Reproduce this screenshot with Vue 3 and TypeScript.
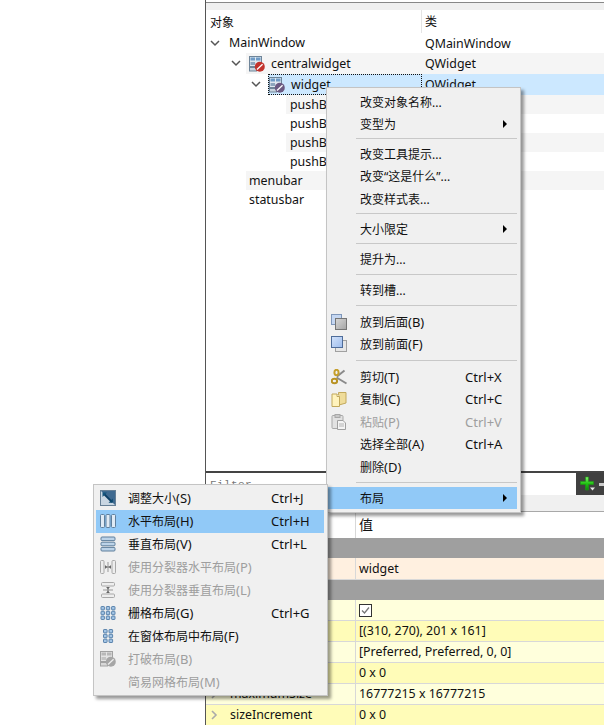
<script setup lang="ts">
interface TreeRow {
  name: string;
  cls: string;
  level: 'root' | 'child' | 'leaf' | 'bar';
  icon?: 'live' | 'muted';
  open?: boolean;
  tall?: boolean;
  shaded?: boolean;
  selected?: boolean;
}

interface PropRow {
  name: string;
  value?: string;
  kind: 'group' | 'peach' | 'pale' | 'yellow';
  check?: boolean;
  arrow?: boolean;
}

interface MenuEntry {
  text?: string;
  mnemonic?: string;
  shortcut?: string;
  icon?: string;
  more?: boolean;
  off?: boolean;
  active?: boolean;
  gap?: number;
}

const treeRows: TreeRow[] = [
  { name: 'MainWindow', cls: 'QMainWindow', level: 'root', open: true },
  { name: 'centralwidget', cls: 'QWidget', level: 'child', icon: 'live', open: true, tall: true, shaded: true },
  { name: 'widget', cls: 'QWidget', level: 'leaf', icon: 'muted', open: true, tall: true, selected: true },
  { name: 'pushButton', cls: 'QPushButton', level: 'bar', shaded: true },
  { name: 'pushButton_2', cls: 'QPushButton', level: 'bar' },
  { name: 'pushButton_3', cls: 'QPushButton', level: 'bar', shaded: true },
  { name: 'pushButton_4', cls: 'QPushButton', level: 'bar' },
  { name: 'menubar', cls: 'QMenuBar', level: 'child', shaded: true },
  { name: 'statusbar', cls: 'QStatusBar', level: 'child' },
];

const propRows: PropRow[] = [
  { name: 'QObject', kind: 'group' },
  { name: 'objectName', value: 'widget', kind: 'peach' },
  { name: 'QWidget', kind: 'group' },
  { name: 'enabled', kind: 'pale', check: true },
  { name: 'geometry', value: '[(310, 270), 201 x 161]', kind: 'yellow', arrow: true },
  { name: 'sizePolicy', value: '[Preferred, Preferred, 0, 0]', kind: 'pale', arrow: true },
  { name: 'minimumSize', value: '0 x 0', kind: 'yellow', arrow: true },
  { name: 'maximumSize', value: '16777215 x 16777215', kind: 'pale', arrow: true },
  { name: 'sizeIncrement', value: '0 x 0', kind: 'yellow', arrow: true },
];

// gap = separator height, they differ a little in the screenshot
const mainMenu: MenuEntry[] = [
  { text: '改变对象名称...' },
  { text: '变型为', more: true },
  { gap: 7 },
  { text: '改变工具提示...' },
  { text: '改变“这是什么”...' },
  { text: '改变样式表...' },
  { gap: 7.5 },
  { text: '大小限定', more: true },
  { gap: 7.8 },
  { text: '提升为...' },
  { gap: 8.5 },
  { text: '转到槽...' },
  { gap: 9.2 },
  { text: '放到后面', mnemonic: '(B)', icon: 'back' },
  { text: '放到前面', mnemonic: '(F)', icon: 'front' },
  { gap: 10.1 },
  { text: '剪切', mnemonic: '(T)', shortcut: 'Ctrl+X', icon: 'cut' },
  { text: '复制', mnemonic: '(C)', shortcut: 'Ctrl+C', icon: 'copy' },
  { text: '粘贴', mnemonic: '(P)', shortcut: 'Ctrl+V', icon: 'paste', off: true },
  { text: '选择全部', mnemonic: '(A)', shortcut: 'Ctrl+A' },
  { text: '删除', mnemonic: '(D)' },
  { gap: 9 },
  { text: '布局', more: true, active: true },
];

const layoutMenu: MenuEntry[] = [
  { text: '调整大小', mnemonic: '(S)', shortcut: 'Ctrl+J', icon: 'adjust' },
  { text: '水平布局', mnemonic: '(H)', shortcut: 'Ctrl+H', icon: 'hbox', active: true },
  { text: '垂直布局', mnemonic: '(V)', shortcut: 'Ctrl+L', icon: 'vbox' },
  { text: '使用分裂器水平布局', mnemonic: '(P)', icon: 'hsplit', off: true },
  { text: '使用分裂器垂直布局', mnemonic: '(L)', icon: 'vsplit', off: true },
  { text: '栅格布局', mnemonic: '(G)', shortcut: 'Ctrl+G', icon: 'grid' },
  { text: '在窗体布局中布局', mnemonic: '(F)', icon: 'form' },
  { text: '打破布局', mnemonic: '(B)', icon: 'break-off', off: true },
  { text: '简易网格布局', mnemonic: '(M)', off: true },
];

const menus = [
  { id: 'main', entries: mainMenu },
  { id: 'layout', entries: layoutMenu },
];
</script>

<template>
  <div class="page">
    <svg class="defs" width="0" height="0" aria-hidden="true">
      <defs>
        <linearGradient id="plus-fill" x1="0" y1="0" x2="0" y2="1">
          <stop offset="0" stop-color="#86f26e" />
          <stop offset="0.5" stop-color="#22c414" />
          <stop offset="1" stop-color="#0b8a0b" />
        </linearGradient>
        <linearGradient id="back-fill" x1="0" y1="0" x2="1" y2="1">
          <stop offset="0" stop-color="#d8d8d8" />
          <stop offset="1" stop-color="#a4a4a4" />
        </linearGradient>
        <linearGradient id="front-fill" x1="0" y1="0" x2="1" y2="1">
          <stop offset="0" stop-color="#d3e3fb" />
          <stop offset="1" stop-color="#9dbcec" />
        </linearGradient>
        <g id="cells">
          <rect x="0.5" y="0.5" width="12" height="10" fill="#dfe8f0" stroke="#6f8599" />
          <rect x="1.5" y="1.5" width="4.5" height="3" fill="#6f9bc6" />
          <rect x="7" y="1.5" width="4.5" height="3" fill="#6f9bc6" />
          <rect x="1.5" y="6" width="4.5" height="3" fill="#8da6bd" />
          <rect x="0.5" y="11.5" width="7" height="3.5" fill="#c7d3de" stroke="#6f8599" />
        </g>
      </defs>
      <symbol id="icon-break" viewBox="0 0 16 16">
        <use href="#cells" />
        <circle cx="10.8" cy="10.8" r="5" fill="currentColor" />
        <path d="M8 13.4 13.6 8.2" stroke="#fff" stroke-width="1.3" />
      </symbol>
      <symbol id="icon-break-off" viewBox="0 0 16 16">
        <rect x="0.5" y="0.5" width="12" height="10" fill="#e4e4e4" stroke="#a2a2a2" />
        <rect x="1.5" y="1.5" width="4.5" height="3" fill="#b8b8b8" />
        <rect x="7" y="1.5" width="4.5" height="3" fill="#b8b8b8" />
        <rect x="1.5" y="6" width="4.5" height="3" fill="#c4c4c4" />
        <rect x="0.5" y="11.5" width="7" height="3.5" fill="#d8d8d8" stroke="#a2a2a2" />
        <circle cx="10.8" cy="10.8" r="5" fill="#a6a6a6" />
        <path d="M8 13.4 13.6 8.2" stroke="#eee" stroke-width="1.3" />
      </symbol>
      <symbol id="icon-adjust" viewBox="0 0 16 16">
        <rect x="0.5" y="0.5" width="15" height="15" fill="#c9d6e2" stroke="#667f95" />
        <path d="M1 1H15V15Z" fill="#3f6a90" />
        <path d="M3.5 3.5 12 12" stroke="#0d3f66" stroke-width="1.8" />
        <path d="M12.8 8.5V12.8H8.5Z" fill="#0d4a70" />
        <path d="M2.5 7V2.5H7Z" fill="#14557d" />
      </symbol>
      <symbol id="icon-hbox" viewBox="0 0 16 16">
        <rect x="0.5" y="1.5" width="4" height="13" rx="1" fill="#e0ebf5" stroke="#5f7f9c" />
        <rect x="6" y="1.5" width="4" height="13" rx="1" fill="#e0ebf5" stroke="#5f7f9c" />
        <rect x="11.5" y="1.5" width="4" height="13" rx="1" fill="#e0ebf5" stroke="#5f7f9c" />
      </symbol>
      <symbol id="icon-vbox" viewBox="0 0 16 16">
        <rect x="1" y="1" width="14" height="3.6" rx="1" fill="#bcd3e8" stroke="#5f7f9c" />
        <rect x="1" y="6.2" width="14" height="3.6" rx="1" fill="#bcd3e8" stroke="#5f7f9c" />
        <rect x="1" y="11.4" width="14" height="3.6" rx="1" fill="#bcd3e8" stroke="#5f7f9c" />
      </symbol>
      <symbol id="icon-hsplit" viewBox="0 0 16 16">
        <rect x="0.5" y="1.5" width="3.5" height="13" rx="1" fill="#eee" stroke="#a8a8a8" />
        <rect x="12" y="1.5" width="3.5" height="13" rx="1" fill="#eee" stroke="#a8a8a8" />
        <path d="M5 8H11" stroke="#666" stroke-width="1.2" />
        <path d="M8 3V13" stroke="#999" />
        <path d="M5 6V10L7 8ZM11 6V10L9 8Z" fill="#666" />
      </symbol>
      <symbol id="icon-vsplit" viewBox="0 0 16 16">
        <rect x="1.5" y="0.5" width="13" height="3.5" rx="1" fill="#eee" stroke="#a8a8a8" />
        <rect x="1.5" y="12" width="13" height="3.5" rx="1" fill="#eee" stroke="#a8a8a8" />
        <path d="M8 5V11" stroke="#666" stroke-width="1.2" />
        <path d="M3 8H13" stroke="#999" />
        <path d="M6 5H10L8 7ZM6 11H10L8 9Z" fill="#666" />
      </symbol>
      <symbol id="icon-grid" viewBox="0 0 16 16">
        <g fill="#a3c4e4" stroke="#4f7ba6" stroke-width="0.9">
          <rect x="1" y="1.5" width="3.4" height="3.4" rx="0.6" />
          <rect x="6.3" y="1.5" width="3.4" height="3.4" rx="0.6" />
          <rect x="11.6" y="1.5" width="3.4" height="3.4" rx="0.6" />
          <rect x="1" y="6.3" width="3.4" height="3.4" rx="0.6" />
          <rect x="6.3" y="6.3" width="3.4" height="3.4" rx="0.6" />
          <rect x="11.6" y="6.3" width="3.4" height="3.4" rx="0.6" />
          <rect x="1" y="11.1" width="3.4" height="3.4" rx="0.6" />
          <rect x="6.3" y="11.1" width="3.4" height="3.4" rx="0.6" />
          <rect x="11.6" y="11.1" width="3.4" height="3.4" rx="0.6" />
        </g>
      </symbol>
      <symbol id="icon-form" viewBox="0 0 16 16">
        <g fill="#a3c4e4" stroke="#4f7ba6" stroke-width="0.9">
          <rect x="3.5" y="1.5" width="3.6" height="3.4" rx="0.6" />
          <rect x="9" y="1.5" width="3.6" height="3.4" rx="0.6" />
          <rect x="3.5" y="6.3" width="3.6" height="3.4" rx="0.6" />
          <rect x="9" y="6.3" width="3.6" height="3.4" rx="0.6" />
          <rect x="3.5" y="11.1" width="3.6" height="3.4" rx="0.6" />
          <rect x="9" y="11.1" width="3.6" height="3.4" rx="0.6" />
        </g>
      </symbol>
      <symbol id="icon-back" viewBox="0 0 16 16">
        <rect x="0.5" y="0.5" width="10" height="10" fill="#c5d7f2" stroke="#7f97ba" />
        <rect x="4.5" y="4.5" width="11" height="11" fill="url(#back-fill)" stroke="#757575" />
      </symbol>
      <symbol id="icon-front" viewBox="0 0 16 16">
        <rect x="4.5" y="4.5" width="11" height="11" fill="#e6e6e6" stroke="#a0a0a0" />
        <rect x="0.5" y="0.5" width="11" height="11" fill="url(#front-fill)" stroke="#4e6c99" />
      </symbol>
      <symbol id="icon-cut" viewBox="0 0 16 16">
        <path d="M5.5 8.5 15.5 14.5M6 7.5 13.5 1.5" stroke="#8a8a8a" stroke-width="2" fill="none" />
        <ellipse cx="3.4" cy="12" rx="2.7" ry="2.3" fill="none" stroke="#b89222" stroke-width="2" />
        <ellipse cx="5.5" cy="3.5" rx="2.1" ry="2.7" fill="none" stroke="#c59f2d" stroke-width="2" />
      </symbol>
      <symbol id="icon-copy" viewBox="0 0 16 16">
        <path d="M7.5 1.5H15V12L8 14Z" fill="#efdc9a" stroke="#c2a95c" />
        <path d="M1 3H6L8.5 5.5V15.5H1Z" fill="#fff3bd" stroke="#c2a95c" />
        <path d="M6 3V5.5H8.5" fill="#fff" stroke="#c2a95c" />
      </symbol>
      <symbol id="icon-paste" viewBox="0 0 16 16">
        <rect x="1" y="1.5" width="11" height="13" rx="1" fill="#e2e2e2" stroke="#a8a8a8" />
        <rect x="4" y="0.5" width="5" height="3" fill="#c8c8c8" stroke="#a8a8a8" />
        <path d="M6.5 6.5H12L14.5 9V15.5H6.5Z" fill="#f4f4f4" stroke="#a0a0a0" />
        <path d="M8 10H13M8 12H13" stroke="#b4b4b4" />
      </symbol>
    </svg>

    <div class="panel">
      <div class="top-strip"></div>

      <div class="tree">
        <div class="tree-head">
          <span class="head-name">对象</span>
          <span class="head-class">类</span>
        </div>
        <div
          v-for="row in treeRows"
          :key="row.name"
          class="tree-row"
          :class="[row.level, { tall: row.tall }]"
        >
          <span class="gutter">
            <svg v-if="row.open" class="chevron" width="10" height="7" viewBox="0 0 10 7">
              <path d="M1 1 5 5 9 1" fill="none" stroke="#555" stroke-width="1.5" />
            </svg>
          </span>
          <div class="band" :class="{ shaded: row.shaded, selected: row.selected }">
            <div class="name-cell">
              <svg v-if="row.icon" class="obj-icon" :class="row.icon" width="16" height="16">
                <use href="#icon-break" />
              </svg>
              <span>{{ row.name }}</span>
            </div>
            <span class="class-cell">{{ row.cls }}</span>
          </div>
        </div>
      </div>

      <div class="filter-bar">
        <span class="filter-input">Filter</span>
        <div class="filter-tools">
          <svg width="18" height="18" viewBox="0 0 18 18">
            <path d="M6.5 2H9.5V6.5H14.5V9.5H9.5V15H6.5V9.5H1.5V6.5H6.5Z" fill="url(#plus-fill)" stroke="#1c9a12" stroke-width="0.6" />
            <path d="M11 12.5H16L13.5 15.5Z" fill="#e8e8e8" />
          </svg>
          <span class="minus"></span>
        </div>
      </div>

      <div class="prop-strip"></div>

      <div class="prop-head">
        <span class="prop-name">属性</span>
        <span class="prop-value">值</span>
      </div>
      <div
        v-for="prop in propRows"
        :key="prop.name"
        class="prop-row"
        :class="prop.kind"
      >
        <span class="prop-name">
          <svg v-if="prop.arrow" class="prop-arrow" width="7" height="10" viewBox="0 0 7 10">
            <path d="M1 1 5 5 1 9" fill="none" stroke="#aaa" stroke-width="1.6" />
          </svg>
          {{ prop.name }}
        </span>
        <span class="prop-value">
          <svg v-if="prop.check" width="13" height="13" viewBox="0 0 13 13">
            <rect x="0.5" y="0.5" width="12" height="12" fill="#fff" stroke="#333" />
            <path d="M3 6.5 5.5 9 10 3.5" fill="none" stroke="#777" stroke-width="1.3" />
          </svg>
          <template v-else>{{ prop.kind === 'group' ? '' : prop.value }}</template>
        </span>
      </div>
    </div>

    <div v-for="menu in menus" :key="menu.id" class="menu" :class="menu.id">
      <template v-for="(entry, i) in menu.entries" :key="i">
        <div v-if="entry.gap" class="sep" :style="{ height: `${entry.gap}px` }"></div>
        <div v-else class="item" :class="{ off: entry.off, active: entry.active }">
          <span class="item-icon">
            <svg v-if="entry.icon" width="16" height="16"><use :href="`#icon-${entry.icon}`" /></svg>
          </span>
          <span class="item-text">{{ entry.text }}<span class="latin">{{ entry.mnemonic }}</span></span>
          <span v-if="entry.shortcut" class="shortcut">{{ entry.shortcut }}</span>
          <span v-if="entry.more" class="more"></span>
        </div>
      </template>
    </div>
  </div>
</template>

<style>
html,
body {
  background: #fff;
  overflow: hidden;
}
</style>

<style scoped>
.page {
  position: relative;
  width: 604px;
  height: 725px;
  overflow: hidden;
  background: #fff;
  color: #111;
  font-family: "Noto Sans", "Noto Sans CJK SC", sans-serif;
  font-size: 12.4px;
}

.defs {
  position: absolute;
}

.panel {
  display: flex;
  flex-direction: column;
  height: 725px;
  margin-left: 205px;
  border-left: 1px solid #555;
}

.top-strip {
  flex: none;
  height: 7px;
  margin-top: 2px;
  border-top: 1px solid #888;
  background: #f0f0f0;
}

.tree {
  flex: none;
  height: 461px;
}

.tree-head {
  display: flex;
  align-items: center;
  height: 23px;
  font-size: 12px;
}

.head-name {
  width: 216px;
  height: 23px;
  padding-left: 4px;
  box-sizing: border-box;
  border-right: 1px solid #e4e4e4;
  line-height: 26px;
}

.head-class {
  padding-left: 3px;
  line-height: 26px;
}

.tree-row {
  display: flex;
  height: 19px;
  line-height: 19px;
  --gutter: 40px;
}

.tree-row.root {
  height: 20px;
  line-height: 22px;
  --gutter: 23px;
}

.tree-row.leaf {
  --gutter: 62px;
}

.tree-row.bar {
  --gutter: 80px;
}

.tree-row.tall {
  height: 21px;
  line-height: 21px;
}

.gutter {
  position: relative;
  flex: none;
  width: var(--gutter);
}

.chevron {
  position: absolute;
  top: 7px;
  right: 5px;
}

.root .chevron {
  right: 9px;
}

.leaf .chevron {
  right: 7px;
}

.band {
  display: flex;
  flex: 1;
  min-width: 0;
}

.band.shaded {
  background: #f5f5f5;
}

.band.selected {
  background: #cce8ff;
}

.name-cell {
  display: flex;
  flex: none;
  align-items: center;
  width: calc(216px - var(--gutter));
  box-sizing: border-box;
  padding-left: 3px;
  gap: 6px;
}

.selected .name-cell {
  outline: 1px dotted #111;
  outline-offset: -1px;
}

.root .name-cell {
  padding-left: 0;
}

.leaf .name-cell {
  padding-left: 1px;
}

.bar .name-cell {
  padding-left: 4px;
}

.class-cell {
  padding-left: 3px;
}

.obj-icon.live {
  color: #c2332c;
}

.obj-icon.muted {
  color: #6b5a82;
}

.filter-bar {
  display: flex;
  flex: none;
  height: 24px;
  border-top: 2px solid #444;
  box-sizing: border-box;
}

.filter-input {
  flex: 1;
  padding: 6px 0 0 4px;
  color: #777;
  font-family: "Liberation Mono", monospace;
  font-size: 11px;
  letter-spacing: 0.4px;
  line-height: 12px;
}

.filter-tools {
  display: flex;
  align-items: center;
  width: 28px;
  padding-left: 3px;
  box-sizing: border-box;
  overflow: hidden;
  background: #404040;
}

.minus {
  flex: none;
  width: 5px;
  height: 3px;
  margin-left: 2px;
  background: #ccc;
}

.prop-strip {
  flex: none;
  height: 17px;
  box-sizing: border-box;
  border-bottom: 1px solid #a8a8a8;
  background: #f0f0f0;
}

.prop-head,
.prop-row {
  display: flex;
  flex: none;
  box-sizing: border-box;
}

.prop-head {
  height: 26px;
  align-items: stretch;
  font-size: 13px;
  line-height: 23px;
}

.prop-row {
  height: 21px;
  border-bottom: 1px solid #d8d8d8;
  line-height: 20px;
}

.prop-name {
  display: flex;
  flex: none;
  align-items: center;
  width: 150px;
  box-sizing: border-box;
  padding-left: 24px;
  border-right: 1px solid #d8d8d8;
}

.prop-arrow {
  position: absolute;
  left: 211px;
}

.prop-value {
  display: flex;
  align-items: center;
  padding-left: 3px;
}

.prop-head .prop-value {
  padding-left: 3px;
  padding-bottom: 2px;
  font-size: 14px;
}

.group {
  height: 20px;
  border-bottom: 0;
  background: #9f9f9f;
  color: #fff;
}

.group .prop-name {
  border-right: 0;
}

.peach {
  height: 22px;
  background: #fff0e0;
}

.pale {
  background: #ffffdc;
}

.yellow {
  background: #fffcb8;
}

.menu {
  position: absolute;
  box-sizing: border-box;
  border: 1px solid #c4c4c4;
  background: #f0f0f0;
  box-shadow: 3px 3px 3px rgba(0, 0, 0, 0.4);
  font-size: 12px;
}

.menu.main {
  top: 87px;
  left: 326px;
  width: 195px;
  height: 426px;
  padding: 2.4px 3px 3px 1px;
  --icon-pad: 3px;
  --icon-gap: 13px;
  --shortcut: 52px;
}

.menu.layout {
  top: 484px;
  left: 93px;
  width: 235px;
  height: 212px;
  padding: 2px 3px 2px 2px;
  --icon-pad: 4px;
  --icon-gap: 12px;
  --shortcut: 53px;
}

.sep {
  margin-left: 28px;
  background: linear-gradient(#c8c8c8, #c8c8c8) center / 100% 1px no-repeat;
}

.item {
  display: flex;
  align-items: center;
  height: 22.5px;
  padding-left: var(--icon-pad);
  white-space: nowrap;
}

.layout .item {
  height: 22.9px;
}

.item.active {
  background: #91c9f7;
}

.item.off {
  color: #9e9e9e;
}

.item-icon {
  display: flex;
  flex: none;
  width: 16px;
  height: 16px;
  margin-right: var(--icon-gap);
}

.item-text {
  flex: 1;
}

.latin,
.shortcut {
  font-size: 13px;
}

.shortcut {
  flex: none;
  width: var(--shortcut);
}

.more {
  flex: none;
  width: 0;
  height: 0;
  margin-right: 10px;
  border-top: 4px solid transparent;
  border-bottom: 4px solid transparent;
  border-left: 4px solid #000;
}
</style>
